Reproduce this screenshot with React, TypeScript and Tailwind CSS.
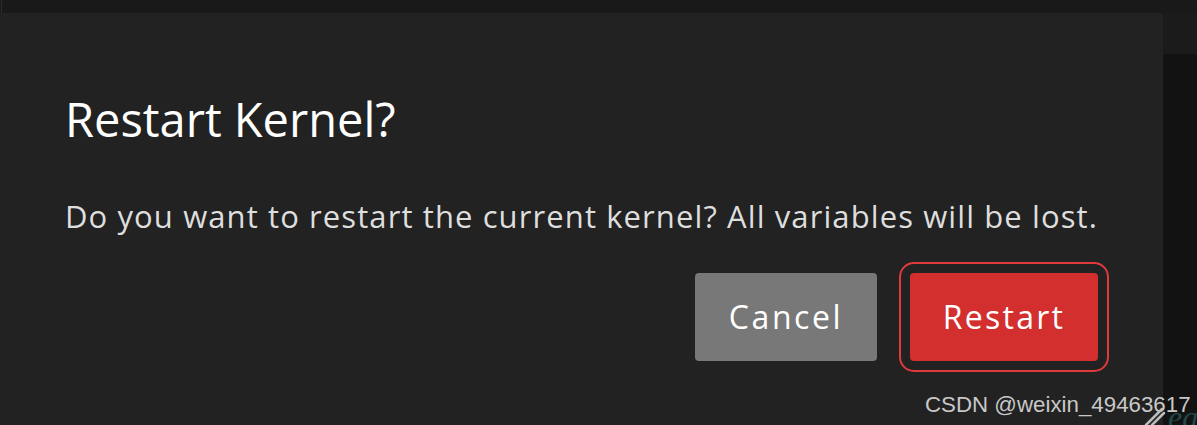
import React from 'react';

const font = { fontFamily: '"Open Sans", "Noto Sans", sans-serif' };

export default function App() {
    return (
        <div className="relative w-[1197px] h-[425px] overflow-hidden bg-[#191919]" style={font}>
            {/* barra superior */}
            <div className="h-[13px] flex">
                <div className="ml-[1px] w-px bg-[#2c2c2c]" />
            </div>

            <div className="flex h-[412px]">
                {/* dialogo */}
                <div className="w-[1163px] h-full bg-[#222222] rounded-tr-[4px] pl-[65px] pr-[65px] pt-[78px]">
                    <h2 className="text-[47px] leading-[56px] text-white">Restart Kernel?</h2>
                    <p className="mt-[51px] text-[31px] leading-[36px] tracking-[1.1px] text-[#dedede] whitespace-nowrap">
                        Do you want to restart the current kernel? All variables will be lost.
                    </p>
                    <div className="mt-[39px] flex justify-end gap-[33px]">
                        <button className="w-[182px] h-[88px] rounded-[4px] bg-[#787878] text-white text-[32px] tracking-[0.08em]">
                            Cancel
                        </button>
                        <button className="w-[188px] h-[88px] rounded-[4px] bg-[#d32f2f] text-white text-[32px] tracking-[0.07em] outline-2 outline-[#e03a3a] outline-offset-[9px]">
                            Restart
                        </button>
                    </div>
                </div>

                {/* panel derecho */}
                <div className="flex-1 flex flex-col">
                    <div className="h-[41px] bg-[#1b1b1b]" />
                    <div className="flex-1 bg-[#121212]" />
                </div>
            </div>

            {/* marca de agua */}
            <div className="absolute left-[925px] top-[391px] text-[22.3px] leading-[28px] text-[#c8c8c8] whitespace-nowrap" style={{ fontFamily: '"Liberation Sans", Arial, sans-serif' }}>
                CSDN @weixin_49463617
            </div>
            <div className="absolute left-[1168px] top-[399px] text-[32px] leading-[36px] italic text-[#234848]" style={{ fontFamily: '"Liberation Serif", serif' }}>
                ea
            </div>
            <svg className="absolute left-[1144px] top-[405px]" width="22" height="22" viewBox="0 0 22 22">
                <path d="M2 20 L18 4 M8 20 L20 8" stroke="#bdbdbd" strokeWidth="2.5" strokeLinecap="round" />
            </svg>
        </div>
    );
}
